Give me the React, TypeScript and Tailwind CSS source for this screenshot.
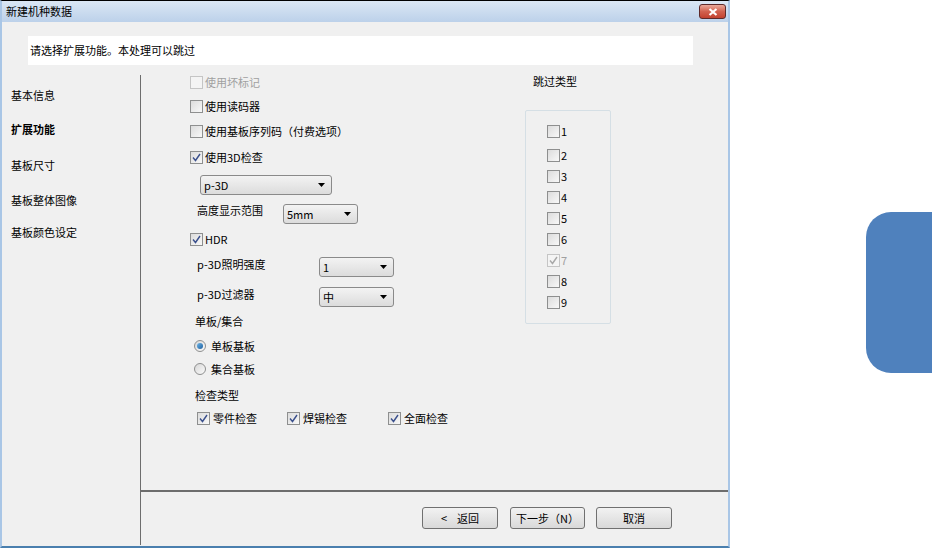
import React from "react";

const font = { fontFamily: '"Noto Sans CJK SC", "Liberation Sans", sans-serif' };

const Box = ({ checked = false, disabled = false }: { checked?: boolean; disabled?: boolean }) => (
  <span
    className={`relative flex h-[13px] w-[13px] shrink-0 items-center justify-center border ${
      disabled ? "border-[#c5c5c5] bg-[#f4f4f4]" : "border-[#8e8f8f] bg-gradient-to-br from-[#dcdcdc] to-[#f8f8f8]"
    }`}
  >
    {checked && (
      <svg width="9" height="9" viewBox="0 0 9 9">
        <path
          d="M1 4.5 L3.5 7.5 L8 1"
          fill="none"
          stroke={disabled ? "#a8a8a8" : "#3a4f8c"}
          strokeWidth="1.4"
        />
      </svg>
    )}
  </span>
);

const Check = ({
  label,
  checked = false,
  disabled = false,
  gap = "gap-[2px]",
}: {
  label: string;
  checked?: boolean;
  disabled?: boolean;
  gap?: string;
}) => (
  <div className={`flex h-[14px] items-center ${gap}`}>
    <Box checked={checked} disabled={disabled} />
    <span className={disabled ? "text-[#a0a0a0]" : "text-black"}>{label}</span>
  </div>
);

const Radio = ({ label, on = false }: { label: string; on?: boolean }) => (
  <div className="flex h-[14px] items-center gap-[5px]">
    <span className="flex h-[12px] w-[12px] items-center justify-center rounded-full border border-[#8e8f8f] bg-gradient-to-br from-[#d8d8d8] to-[#fafafa]">
      {on && <span className="h-[6px] w-[6px] rounded-full bg-gradient-to-br from-[#6fb6e8] to-[#1b5f9e]" />}
    </span>
    <span>{label}</span>
  </div>
);

const Select = ({ value, width }: { value: string; width: string }) => (
  <div
    className={`flex h-[20px] ${width} items-center justify-between rounded-[3px] border border-[#8a8a8a] bg-gradient-to-b from-[#f3f3f3] to-[#dcdcdc] pl-[3px] pr-[6px]`}
  >
    <span>{value}</span>
    <svg width="7" height="4" viewBox="0 0 7 4">
      <path d="M0 0 H7 L3.5 4 Z" fill="#000" />
    </svg>
  </div>
);

const Btn = ({ children, w = "w-[76px]" }: { children: React.ReactNode; w?: string }) => (
  <button
    className={`flex h-[22px] ${w} items-center justify-center rounded-[3px] border border-[#707070] bg-gradient-to-b from-[#f2f2f2] to-[#d9d9d9] text-[11px]`}
  >
    {children}
  </button>
);

const navItems = [
  { label: "基本信息", bold: false, mt: "mt-[13px]" },
  { label: "扩展功能", bold: true, mt: "mt-[20px]" },
  { label: "基板尺寸", bold: false, mt: "mt-[22px]" },
  { label: "基板整体图像", bold: false, mt: "mt-[21px]" },
  { label: "基板颜色设定", bold: false, mt: "mt-[18px]" },
];

const skip = ["1", "2", "3", "4", "5", "6", "7", "8", "9"];

export default function App() {
  return (
    <div className="flex h-[548px] w-[932px] bg-white text-[11px] text-black" style={font}>
      <div className="flex h-full w-[730px] flex-col border-x-2 border-b-2 border-t border-x-[#a9c6e6] border-b-[#4a7fae] border-t-black">
        <div className="flex h-[21px] items-center justify-between bg-gradient-to-b from-[#dbe7f4] to-[#bcd1ea] pl-[4px] pr-[2px]">
          <span className="text-[11px] text-black">新建机种数据</span>
          <div className="flex h-[15px] w-[27px] items-center justify-center rounded-[3px] border border-[#5e2a2a] bg-gradient-to-b from-[#e9a99b] via-[#d1614f] to-[#c2412f]">
            <svg width="10" height="8" viewBox="0 0 10 8">
              <path d="M1.5 1 L8.5 7 M8.5 1 L1.5 7" stroke="#fff" strokeWidth="2.2" />
            </svg>
          </div>
        </div>

        <div className="flex flex-1 flex-col bg-[#f0f0f0]">
          <div className="ml-[26px] mt-[14px] flex h-[29px] w-[665px] items-center bg-white pl-[2px]">
            请选择扩展功能。本处理可以跳过
          </div>

          <div className="mt-[10px] flex flex-1">
            <div className="flex w-[138px] flex-col pl-[9px]">
              {navItems.map((n) => (
                <div key={n.label} className={`flex h-[14px] ${n.mt} items-center ${n.bold ? "font-bold" : ""}`}>
                  {n.label}
                </div>
              ))}
            </div>

            <div className="mb-[1px] w-px bg-[#6d6d6d]" />

            <div className="flex flex-1 flex-col">
              <div className="flex flex-1">
                <div className="flex w-[384px] flex-col pl-[49px]">
                  <Check label="使用坏标记" disabled />
                  <div className="mt-[10px]">
                    <Check label="使用读码器" />
                  </div>
                  <div className="mt-[11px]">
                    <Check label="使用基板序列码（付费选项）" />
                  </div>
                  <div className="mt-[12px]">
                    <Check label="使用3D检查" checked />
                  </div>
                  <div className="ml-[10px] mt-[11px]">
                    <Select value="p-3D" width="w-[132px]" />
                  </div>
                  <div className="ml-[7px] mt-[9px] flex h-[20px]">
                    <span className="w-[86px] leading-[12px]">高度显示范围</span>
                    <Select value="5mm" width="w-[75px]" />
                  </div>
                  <div className="mt-[8px]">
                    <Check label="HDR" checked />
                  </div>
                  <div className="ml-[7px] mt-[11px] flex h-[20px]">
                    <span className="w-[122px] pt-[1px] leading-[12px]">p-3D照明强度</span>
                    <Select value="1" width="w-[75px]" />
                  </div>
                  <div className="ml-[7px] mt-[10px] flex h-[20px]">
                    <span className="w-[122px] pt-[1px] leading-[12px]">p-3D过滤器</span>
                    <Select value="中" width="w-[75px]" />
                  </div>
                  <div className="ml-[5px] mt-[7px] flex h-[14px] items-center">单板/集合</div>
                  <div className="ml-[4px] mt-[11px]">
                    <Radio label="单板基板" on />
                  </div>
                  <div className="ml-[4px] mt-[9px]">
                    <Radio label="集合基板" />
                  </div>
                  <div className="ml-[5px] mt-[12px] flex h-[14px] items-center">检查类型</div>
                  <div className="ml-[7px] mt-[9px] flex">
                    <div className="w-[90px]">
                      <Check label="零件检查" checked gap="gap-[3px]" />
                    </div>
                    <div className="w-[101px]">
                      <Check label="焊锡检查" checked gap="gap-[3px]" />
                    </div>
                    <Check label="全面检查" checked gap="gap-[3px]" />
                  </div>
                </div>

                <div className="flex flex-col">
                  <div className="ml-[8px] mt-[-1px] flex h-[14px] items-center">跳过类型</div>
                  <div className="mt-[22px] flex h-[214px] w-[86px] flex-col rounded-[2px] border border-[#d5dfe5] pl-[21px] pt-[13px]">
                    {skip.map((s, i) => (
                      <div key={s} className={i === 0 ? "" : i === 1 ? "mt-[10px]" : "mt-[7px]"}>
                        <Check label={s} disabled={s === "7"} checked={s === "7"} gap="gap-[1px]" />
                      </div>
                    ))}
                  </div>
                </div>
              </div>

              <div className="h-[2px] bg-[#6d6d6d]" />

              <div className="flex h-[54px] pl-[281px] pt-[15px]">
                <Btn>
                  <span className="mr-[10px]">&lt;</span>返回
                </Btn>
                <div className="ml-[12px]">
                  <Btn w="w-[75px]">下一步（N）</Btn>
                </div>
                <div className="ml-[11px]">
                  <Btn>取消</Btn>
                </div>
              </div>
            </div>
          </div>
        </div>
      </div>

      <div className="flex-1" />
      <div className="mt-[212px] h-[161px] w-[66px] rounded-l-[25px] bg-[#4f81bd]" />
    </div>
  );
}
